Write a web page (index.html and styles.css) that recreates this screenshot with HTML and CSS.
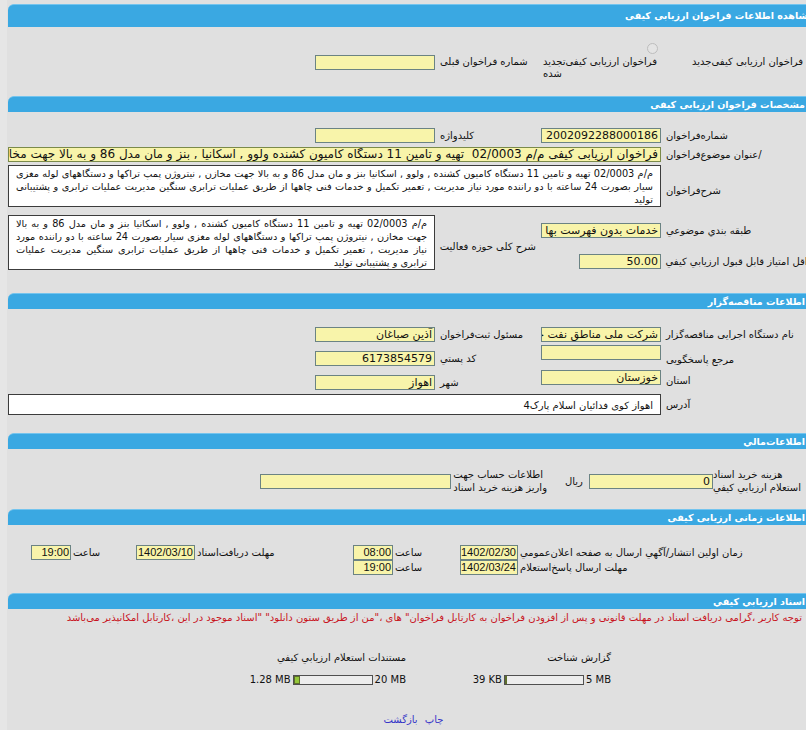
FILE: index.html
```html
<!DOCTYPE html>
<html lang="fa">
<head>
    <meta charset="UTF-8">
    <title>مشاهده اطلاعات فراخوان ارزیابی کیفی</title>
    <link rel="stylesheet" href="styles.css">
</head>
<body>
<div class="page">

    <div class="bar bar-main">مشاهده اطلاعات فراخوان ارزیابی کیفی</div>
    <div class="grid grid-top">
        <div class="opt opt-new"><span class="radio"></span><span>فراخوان ارزیابی کیفی‌جدید</span></div>
        <div class="opt opt-renew"><span class="radio"></span><span class="opt-text">فراخوان ارزیابی کیفی‌تجدید<br>شده</span></div>
        <div class="lbl prev-lbl">شماره فراخوان قبلی</div>
        <div class="field prev-field"></div>
    </div>

    <div class="bar">مشخصات فراخوان ارزیابی کیفی</div>
    <div class="grid grid-spec">
        <div class="lbl c1">شماره‌فراخوان</div>
        <div class="field">2002092288000186</div>
        <div class="lbl">کلیدواژه</div>
        <div class="field"></div>

        <div class="lbl c1">/عنوان موضوع‌فراخوان</div>
        <div class="field span-4 field-title">فراخوان ارزیابی کیفی م/م 02/0003 &nbsp;تهیه و تامین 11 دستگاه کامیون کشنده ولوو , اسکانیا , بنز و مان مدل 86 و به بالا جهت مخازن نیتروژن پمپ تراکها</div>

        <div class="lbl c1 mid">شرح‌فراخوان</div>
        <div class="box span-4 box-desc">م/م 02/0003 تهیه و تامین 11 دستگاه کامیون کشنده , ولوو , اسکانیا بنز و مان مدل 86 و به بالا جهت مخازن , نیتروژن پمپ تراکها و دستگاههای لوله مغزی سیار بصورت 24 ساعته با دو راننده مورد نیاز مدیریت , تعمیر تکمیل و خدمات فنی چاهها از طریق عملیات ترابری سنگین مدیریت عملیات ترابری و پشتیبانی تولید</div>

        <div class="lbl c1 mid">طبقه بندي موضوعي</div>
        <div class="field mid">خدمات بدون فهرست بها</div>
        <div class="lbl rows-2 mid">شرح کلی حوزه فعالیت</div>
        <div class="box span-2 rows-2 box-scope">م/م 02/0003 تهیه و تامین 11 دستگاه کامیون کشنده , ولوو , اسکانیا بنز و مان مدل 86 و به بالا جهت مخازن , نیتروژن پمپ تراکها و دستگاههای لوله مغزی سیار بصورت 24 ساعته با دو راننده مورد نیاز مدیریت , تعمیر تکمیل و خدمات فنی چاهها از طریق عملیات ترابری سنگین مدیریت عملیات ترابری و پشتیبانی تولید</div>

        <div class="lbl c1 mid">حداقل امتیاز قابل قبول ارزیابي کیفي</div>
        <div class="field mid field-score">50.00</div>
    </div>

    <div class="bar">اطلاعات مناقصه‌گزار</div>
    <div class="org">
        <div class="org-right">
            <div class="lbl">نام دستگاه اجرایی مناقصه‌گزار</div>
            <div class="field">شرکت ملی مناطق نفت خیز</div>
            <div class="lbl drop">مرجع پاسخگویی</div>
            <div class="field"></div>
            <div class="lbl drop-sm">استان</div>
            <div class="field">خوزستان</div>
        </div>
        <div class="org-left">
            <div class="lbl">مسئول ثبت‌فراخوان</div>
            <div class="field">آذین صباغان</div>
            <div class="lbl">کد پستي</div>
            <div class="field">6173854579</div>
            <div class="lbl">شهر</div>
            <div class="field">اهواز</div>
        </div>
    </div>
    <div class="grid grid-address">
        <div class="lbl c1 drop-sm">آدرس</div>
        <div class="box span-4 box-address">اهواز کوی فدائیان اسلام پارک4</div>
    </div>

    <div class="bar">اطلاعات‌مالي</div>
    <div class="money">
        <div class="lbl money-lbl">هزینه خرید اسناد<br>استعلام ارزیابي کیفي</div>
        <div class="field money-field">0</div>
        <div class="lbl rial">ریال</div>
        <div class="lbl account-lbl">اطلاعات حساب جهت<br>واریز هزینه خرید اسناد</div>
        <div class="field account-field"></div>
    </div>

    <div class="bar">اطلاعات زمانی ارزیابی کیفی</div>
    <div class="times">
        <div class="lbl">زمان اولین انتشار/آگهي ارسال به صفحه اعلان‌عمومي</div>
        <div class="field">1402/02/30</div>
        <div class="lbl">ساعت</div>
        <div class="field">08:00</div>
        <div class="lbl">مهلت دریافت‌اسناد</div>
        <div class="field">1402/03/10</div>
        <div class="lbl">ساعت</div>
        <div class="field">19:00</div>

        <div class="lbl c1">مهلت ارسال پاسخ‌استعلام</div>
        <div class="field">1402/03/24</div>
        <div class="lbl">ساعت</div>
        <div class="field">19:00</div>
    </div>

    <div class="bar">اسناد ارزیابي کیفي</div>
    <p class="notice">توجه کاربر ،گرامی دریافت اسناد در مهلت قانونی و پس از افزودن فراخوان به کارتابل فراخوان" های ،"من از طریق ستون دانلود" "اسناد موجود در این ،کارتابل امکانپذیر می‌باشد</p>

    <div class="docs">
        <div class="doc doc-report">
            <div class="doc-title">گزارش شناخت</div>
            <div class="quota">
                <span class="size">5 MB</span>
                <span class="meter"><span class="meter-fill" style="width: 1px"></span></span>
                <span class="size">39 KB</span>
            </div>
        </div>
        <div class="doc">
            <div class="doc-title">مستندات استعلام ارزیابي کیفي</div>
            <div class="quota">
                <span class="size">20 MB</span>
                <span class="meter"><span class="meter-fill" style="width: 6px"></span></span>
                <span class="size">1.28 MB</span>
            </div>
        </div>
    </div>

    <div class="links">
        <a href="#">چاپ</a>
        <a href="#">بازگشت</a>
    </div>

</div>
</body>
</html>
```

FILE: styles.css
```css
html, body {
    margin: 0;
    padding: 0;
    overflow: hidden;
}

body {
    background: #e6e6e6;
    font-family: "DejaVu Sans", sans-serif;
    font-size: 10px;
    color: #111;
}

.page {
    direction: rtl;
    width: 812px;
    min-height: 730px;
    margin-left: 7px;
    padding: 4px 0 0 1px;
    box-sizing: border-box;
    background: #e0e0e0;
}

/* section headers */
.bar {
    height: 16px;
    line-height: 16px;
    margin-right: -1px;
    padding-right: 15px;
    background: #3aa8e2;
    border-top: 1px solid #74c4ee;
    border-radius: 6px 6px 0 0;
    color: #fff;
    font-weight: bold;
    font-size: 9.5px;
    white-space: nowrap;
    box-sizing: border-box;
}

.bar-main {
    height: 23px;
    line-height: 22px;
    padding-right: 6px;
    font-size: 9.5px;
}

/* shared form grid: label | field | label | field | rest */
.grid {
    display: grid;
    grid-template-columns: 153px 120px 96px 120px 1fr;
    column-gap: 5px;
    align-items: start;
}

.c1 { grid-column: 1; }
.span-4 { grid-column: span 4; }
.span-2 { grid-column: span 2; }
.rows-2 { grid-row: span 2; }
.mid { align-self: center; }

.lbl {
    line-height: 15px;
    text-align: left;
    white-space: nowrap;
}

.field {
    height: 15px;
    line-height: 13px;
    padding: 0 2px;
    background: #f8f4aa;
    border: 1px solid #6b8383;
    box-sizing: border-box;
    font-size: 11px;
    white-space: nowrap;
    overflow: hidden;
}

.box {
    background: #fff;
    border: 1px solid #3c3c3c;
    box-sizing: border-box;
    line-height: 13px;
    padding: 1px 7px;
    font-size: 9.75px;
}

/* top choice row */
.grid-top {
    margin: 16px 0 16px;
}

.opt {
    display: flex;
    white-space: nowrap;
}

.radio {
    width: 11px;
    height: 11px;
    border: 1px solid #bdbdbd;
    border-radius: 50%;
    background: #e4e4e4;
    box-sizing: border-box;
    flex: none;
}

.opt-new {
    margin-top: 13px;
    align-items: center;
    gap: 3px;
    line-height: 12px;
}

.opt-new .radio {
    margin-right: 2px;
}

.opt-renew {
    flex-direction: column;
    line-height: 12px;
}

.opt-renew .radio {
    margin: 0 3px 2px 0;
}

.opt-text {
    text-align: left;
    padding-left: 2px;
}

.prev-lbl {
    margin-top: 11px;
}

.prev-field {
    margin-top: 12px;
}

/* specs */
.grid-spec {
    margin: 16px 0 16px;
    grid-template-rows: 19px 18px 50px 30px 32px;
}

.field-title {
    font-size: 12px;
    border-color: #7b8a4a;
}

.box-desc {
    height: 42px;
    overflow: hidden;
    text-align: justify;
    text-align-last: right;
}

.box-scope {
    height: 55px;
    overflow: hidden;
    align-self: start;
    text-align: justify;
    text-align-last: right;
}

.field-score {
    width: 82px;
}

/* organisation */
.org {
    display: flex;
    gap: 1px;
    margin-top: 18px;
}

.org-right {
    display: grid;
    grid-template-columns: 153px 120px;
    grid-template-rows: 18px 25px 20px;
    column-gap: 5px;
    align-items: start;
}

.org-left {
    display: grid;
    grid-template-columns: 100px 120px;
    grid-template-rows: 24px 24px 15px;
    column-gap: 5px;
    align-items: start;
}

.drop { padding-top: 7px; }
.drop-sm { padding-top: 3px; }

.grid-address {
    margin: 4px 0 18px;
}

.box-address {
    height: 21px;
    line-height: 19px;
    font-size: 10px;
}

/* money */
.money {
    display: flex;
    align-items: center;
    margin: 19px 0 15px;
    padding-right: 18px;
}

.lbl.money-lbl,
.lbl.account-lbl {
    line-height: 13px;
}

.money-field {
    width: 124px;
}

.rial {
    margin: 0 6px;
}

.account-lbl {
    margin-right: 12px;
}

.account-field {
    width: 191px;
    margin-right: 2px;
}

/* dates */
.times {
    display: grid;
    grid-template-columns: 301px 58px 67px 40px 158px 59px 65px 40px 1fr;
    margin: 20px 0 18px;
}

.times .field {
    font-family: "Liberation Sans", "DejaVu Sans", sans-serif;
    padding: 0 1px;
}

.times .lbl {
    padding-left: 2px;
}

/* documents */
.notice {
    margin: 2px 0 0;
    padding-right: 17px;
    line-height: 14px;
    color: #c8141e;
    white-space: nowrap;
}

.docs {
    display: flex;
    margin-top: 26px;
    padding-right: 208px;
}

.doc {
    display: flex;
    flex-direction: column;
    align-items: flex-start;
    gap: 8px;
}

.doc-report {
    width: 205px;
}

.doc-title {
    line-height: 14px;
}

.quota {
    display: flex;
    align-items: center;
    gap: 2px;
    line-height: 14px;
}

.size {
    direction: ltr;
    unicode-bidi: isolate;
}

.meter {
    direction: ltr;
    display: flex;
    width: 80px;
    height: 10px;
    background: #ededed;
    border: 1px solid #505050;
    box-sizing: border-box;
}

.meter-fill {
    min-width: 2px;
    background: #95c83a;
    border: 1px solid #5d6e2c;
    box-sizing: border-box;
}

.links {
    margin-top: 26px;
    text-align: center;
    line-height: 14px;
}

.links a {
    color: #3535c8;
    text-decoration: none;
    margin: 0 2px;
}
```
